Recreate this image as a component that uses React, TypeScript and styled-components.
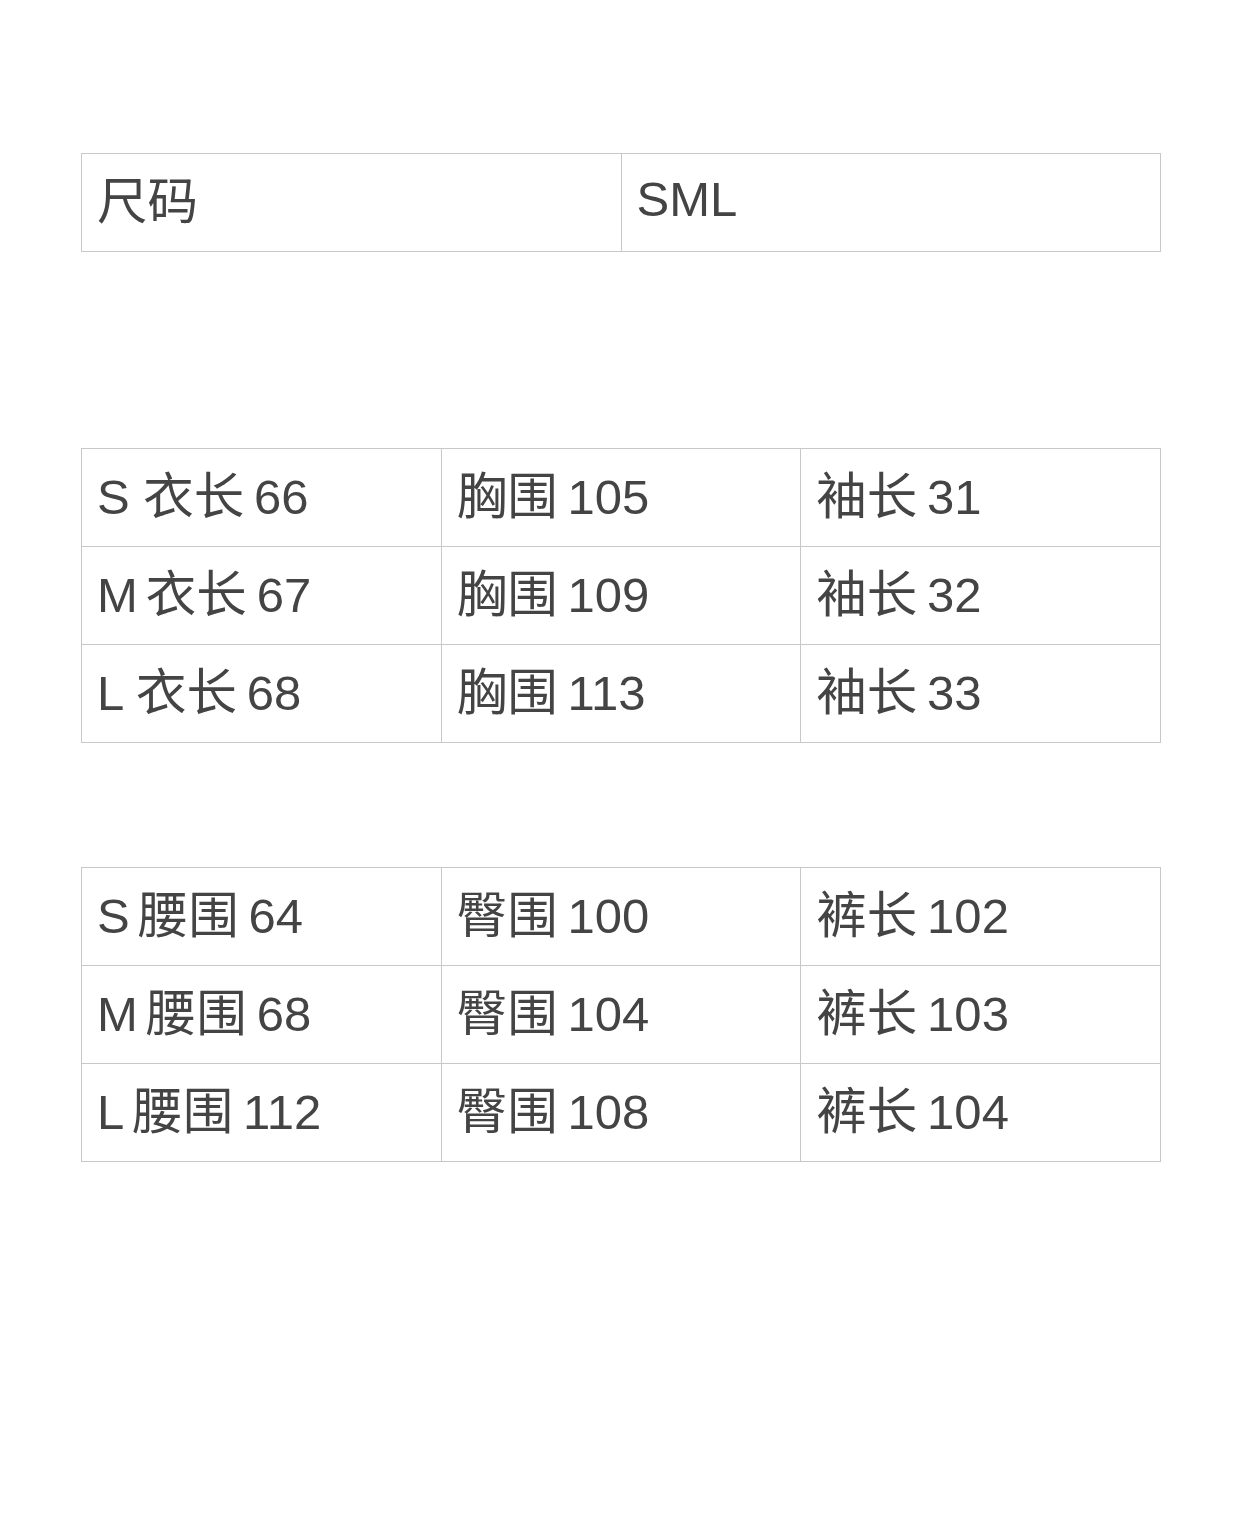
import React from 'react';
import styled, { createGlobalStyle } from 'styled-components';

const GlobalStyle = createGlobalStyle`
  html, body {
    margin: 0;
    padding: 0;
    background: #ffffff;
  }
  body {
    font-family: "Liberation Sans", "Noto Sans CJK SC", sans-serif;
    color: #444444;
  }
`;

const Page = styled.div`
  width: 1239px;
  min-height: 1533px;
  box-sizing: border-box;
  padding: 153px 0 0 81px;
  display: flex;
  flex-direction: column;
`;

const SizeTable = styled.table<{ $gap: number }>`
  width: 1080px;
  border-collapse: collapse;
  table-layout: fixed;
  margin-bottom: ${(props) => props.$gap}px;
`;

const Cell = styled.td`
  height: 98px;
  box-sizing: border-box;
  padding: 0 15px 6px;
  border: 1px solid #c8c8c8;
  font-size: 49px;
  line-height: 1;
  vertical-align: middle;
  white-space: nowrap;
  color: #444444;
`;

// the Chinese glyphs sit a touch larger than the latin ones in the original
const Han = styled.span<{ $before: number }>`
  font-family: "Noto Sans CJK SC", sans-serif;
  font-size: 50.5px;
  margin-left: ${(props) => props.$before}px;
`;

// thin space between the Chinese label and its number
const t = '\u2009';

const header = [['尺码', 'SML']];

const tops = [
  [`S 衣长${t}66`, `胸围${t}105`, `袖长${t}31`],
  [`M衣长${t}67`, `胸围${t}109`, `袖长${t}32`],
  [`L 衣长${t}68`, `胸围${t}113`, `袖长${t}33`],
];

const pants = [
  [`S腰围${t}64`, `臀围${t}100`, `裤长${t}102`],
  [`M腰围${t}68`, `臀围${t}104`, `裤长${t}103`],
  [`L腰围${t}112`, `臀围${t}108`, `裤长${t}104`],
];

function renderText(text: string) {
  const parts = text.split(/([\u4e00-\u9fff]+)/).filter((p) => p !== '');
  return parts.map((part, i) => {
    if (/[\u4e00-\u9fff]/.test(part)) {
      const prev = i > 0 ? parts[i - 1] : '';
      const before = /[A-Za-z]$/.test(prev) ? 8 : 0;
      return (
        <Han key={i} $before={before}>
          {part}
        </Han>
      );
    }
    return <React.Fragment key={i}>{part}</React.Fragment>;
  });
}

function renderRows(rows: string[][]) {
  return rows.map((row, i) => (
    <tr key={i}>
      {row.map((text, j) => (
        <Cell key={j}>{renderText(text)}</Cell>
      ))}
    </tr>
  ));
}

export default function App() {
  return (
    <>
      <GlobalStyle />
      <Page>
        <SizeTable $gap={196}>
          <tbody>{renderRows(header)}</tbody>
        </SizeTable>
        <SizeTable $gap={124}>
          <tbody>{renderRows(tops)}</tbody>
        </SizeTable>
        <SizeTable $gap={0}>
          <tbody>{renderRows(pants)}</tbody>
        </SizeTable>
      </Page>
    </>
  );
}
